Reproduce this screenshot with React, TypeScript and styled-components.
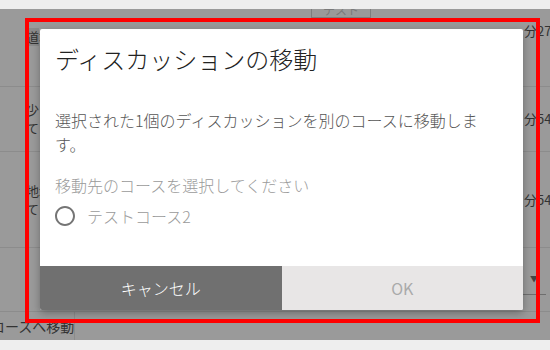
import React from "react";
import styled, { createGlobalStyle } from "styled-components";

const GlobalStyle = createGlobalStyle`
  html, body {
    margin: 0;
    padding: 0;
    background: #eeeeee;
  }
  body {
    font-family: "Noto Sans CJK JP", "Noto Sans", sans-serif;
    width: 550px;
    height: 350px;
    overflow: hidden;
  }
`;

const Frame = styled.div`
  display: flex;
  flex-direction: column;
  width: 550px;
  height: 350px;
`;

const Strip = styled.div<{ h: number }>`
  height: ${(p) => p.h}px;
  background: #eeeeee;
  flex: none;
`;

const Stage = styled.div`
  position: relative;
  height: 331px;
  flex: none;
  background: #9a9a9a;
  display: flex;
  flex-direction: column;
  overflow: hidden;
`;

const Row = styled.div<{ h: number; line?: boolean; align?: string; pad?: number }>`
  height: ${(p) => p.h}px;
  flex: none;
  box-sizing: border-box;
  display: flex;
  align-items: ${(p) => p.align || "center"};
  padding-top: ${(p) => p.pad || 0}px;
  border-bottom: ${(p) => (p.line ? "1px solid #8c8c8c" : "none")};
  font-size: 13px;
  line-height: 18px;
  color: #333;
`;

const HeaderRow = styled.div`
  display: flex;
  flex-direction: column;
  height: 78px;
  flex: none;
  box-sizing: border-box;
  border-bottom: 1px solid #8c8c8c;
`;

const TabButton = styled.div`
  margin-left: 311px;
  width: 60px;
  height: 9px;
  box-sizing: border-box;
  border: 1px solid #7e7e7e;
  border-top: none;
  overflow: hidden;
  font-size: 12px;
  line-height: 2px;
  color: #7a7a7a;
  text-align: center;
`;

const Underline = styled.div`
  margin-left: 305px;
  width: 78px;
  margin-top: 9px;
  border-top: 1px solid #888;
`;

const LeftCell = styled.div`
  width: 60px;
  padding-left: 26px;
  flex: none;
  white-space: nowrap;
  overflow: hidden;
`;

const Mark = styled.span`
  background: #8a8a8a;
`;

const Fill = styled.div`
  flex: 1;
`;

const RightCell = styled.div<{ shift?: number }>`
  width: 26px;
  flex: none;
  margin-top: ${(p) => p.shift || 0}px;
  white-space: nowrap;
  overflow: hidden;
`;

const SelectBox = styled.div`
  width: 23px;
  height: 30px;
  margin-right: 4px;
  box-sizing: border-box;
  border-bottom: 1px solid #6e6e6e;
  display: flex;
  align-items: center;
  justify-content: flex-end;
  padding-right: 8px;
  color: #444;
  font-size: 8px;
`;

const BottomCell = styled.div`
  width: 75px;
  height: 100%;
  box-sizing: border-box;
  border-right: 1px solid #8c8c8c;
  display: flex;
  align-items: center;
  white-space: nowrap;
  overflow: hidden;
  font-size: 14px;
`;

const CutText = styled.span`
  margin-left: -9px;
`;

const Highlight = styled.div`
  position: absolute;
  left: 25px;
  top: 9px;
  width: 515px;
  height: 305px;
  box-sizing: border-box;
  border: 4px solid #ff0000;
  pointer-events: none;
`;

const Dialog = styled.div`
  position: absolute;
  left: 40px;
  top: 20px;
  width: 483px;
  height: 281px;
  background: #ffffff;
  border-radius: 2px;
  box-shadow: 0 3px 8px rgba(0, 0, 0, 0.3);
  display: flex;
  flex-direction: column;
  overflow: hidden;
`;

const Title = styled.h2`
  margin: 0;
  padding: 14px 15px 0;
  font-size: 24px;
  line-height: 32px;
  font-weight: 300;
  color: #222;
`;

const Body = styled.div`
  padding: 0 36px 0 15px;
  display: flex;
  flex-direction: column;
  font-weight: 300;
`;

const Message = styled.p`
  margin: 33px 0 0;
  font-size: 16px;
  line-height: 24px;
  color: #555;
`;

const Label = styled.div`
  margin-top: 17px;
  font-size: 16px;
  line-height: 24px;
  color: #9a9a9a;
`;

const RadioRow = styled.label`
  margin: 3px 0 0 -2px;
  height: 32px;
  display: flex;
  align-items: center;
  gap: 10px;
  font-size: 16px;
  color: #9a9a9a;
`;

const Actions = styled.div`
  margin-top: auto;
  height: 44px;
  display: flex;
`;

const ActionButton = styled.button<{ primary?: boolean }>`
  flex: 1;
  border: none;
  margin: 0;
  padding: 0;
  font-family: "Noto Sans CJK JP", Roboto, sans-serif;
  font-size: 16px;
  font-weight: ${(p) => (p.primary ? 400 : 300)};
  background: ${(p) => (p.primary ? "#e8e6e6" : "#707070")};
  color: ${(p) => (p.primary ? "#aaaaaa" : "#ffffff")};
`;

const RadioIcon = () => (
  <svg width="24" height="24" viewBox="0 0 24 24" fill="#757575">
    <path d="M12 2C6.48 2 2 6.48 2 12s4.48 10 10 10 10-4.48 10-10S17.52 2 12 2zm0 18c-4.42 0-8-3.58-8-8s3.58-8 8-8 8 3.58 8 8-3.58 8-8 8z" />
  </svg>
);

export default function App() {
  return (
    <Frame>
      <GlobalStyle />
      <Strip h={9} />
      <Stage>
        <HeaderRow>
          <TabButton>テスト</TabButton>
          <Row h={40} align="flex-start" pad={10}>
            <LeftCell>
              <Mark>道</Mark>場の話
            </LeftCell>
            <Fill />
            <RightCell shift={-6}>分27秒</RightCell>
          </Row>
          <Underline />
        </HeaderRow>
        <Row h={65} line>
          <LeftCell>
            少し質問
            <br />
            ていいですか
          </LeftCell>
          <Fill />
          <RightCell>分54秒</RightCell>
        </Row>
        <Row h={96} line>
          <LeftCell>
            地域の話
            <br />
            てください
          </LeftCell>
          <Fill />
          <RightCell>分54秒</RightCell>
        </Row>
        <Row h={64} line>
          <Fill />
          <SelectBox>▼</SelectBox>
        </Row>
        <Row h={28}>
          <BottomCell>
            <CutText>コースへ移動</CutText>
          </BottomCell>
        </Row>

        <Dialog>
          <Title>ディスカッションの移動</Title>
          <Body>
            <Message>選択された1個のディスカッションを別のコースに移動します。</Message>
            <Label>移動先のコースを選択してください</Label>
            <RadioRow>
              <RadioIcon />
              テストコース2
            </RadioRow>
          </Body>
          <Actions>
            <ActionButton>キャンセル</ActionButton>
            <ActionButton primary>OK</ActionButton>
          </Actions>
        </Dialog>
        <Highlight />
      </Stage>
      <Strip h={10} />
    </Frame>
  );
}
